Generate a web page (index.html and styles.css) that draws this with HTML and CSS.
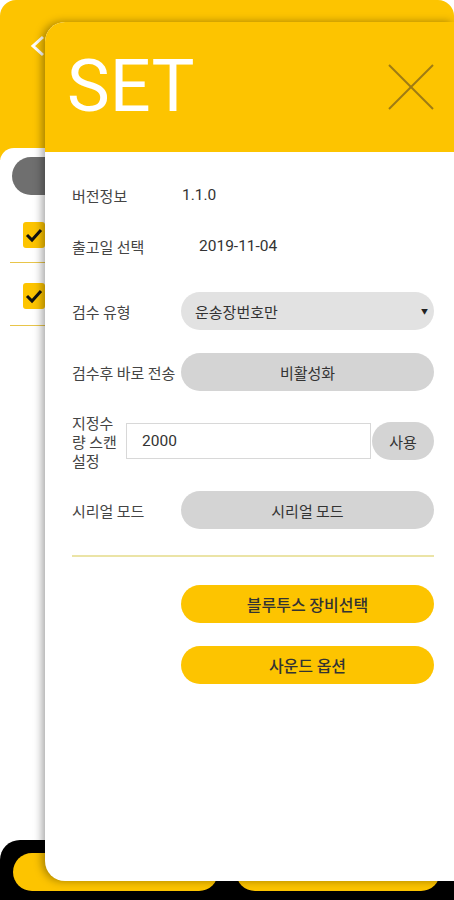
FILE: index.html
```html
<!DOCTYPE html>
<html>
<head>
  <meta charset="UTF-8">
  <title>SET</title>
  <link rel="stylesheet" href="styles.css">
</head>
<body>
  <!-- page behind the dialog -->
  <div class="screen">
    <header class="bg-head">
      <svg class="back" width="16" height="22" viewBox="0 0 16 22"><polyline points="13,2 3,11 13,20" fill="none" stroke="#fff" stroke-width="3"/></svg>
    </header>
    <section class="bg-list">
      <div class="bg-pill"></div>
      <div class="bg-row first"><span class="check"><svg width="22" height="26" viewBox="0 0 22 26"><polyline points="4,13 9,18 18,8" fill="none" stroke="#111" stroke-width="3"/></svg></span></div>
      <div class="bg-row"><span class="check"><svg width="22" height="26" viewBox="0 0 22 26"><polyline points="4,13 9,18 18,8" fill="none" stroke="#111" stroke-width="3"/></svg></span></div>
    </section>
    <footer class="bg-foot">
      <span class="foot-btn"></span>
      <span class="foot-btn"></span>
    </footer>
  </div>

  <!-- settings dialog -->
  <div class="modal">
    <div class="modal-head">
      <h1>SET</h1>
      <svg class="close" width="46" height="46" viewBox="0 0 46 46">
        <line x1="1" y1="1" x2="45" y2="45" stroke="#9e7b14" stroke-width="2"/>
        <line x1="45" y1="1" x2="1" y2="45" stroke="#9e7b14" stroke-width="2"/>
      </svg>
    </div>
    <div class="modal-body">
      <div class="row r1"><span class="label">버전정보</span><span class="value">1.1.0</span></div>
      <div class="row r2"><span class="label">출고일 선택</span><span class="value date">2019-11-04</span></div>
      <div class="row r3"><span class="label">검수 유형</span><div class="pill select"><span>운송장번호만</span><span class="caret">▼</span></div></div>
      <div class="row r4"><span class="label">검수후 바로 전송</span><div class="pill">비활성화</div></div>
      <div class="row r5"><span class="label narrow">지정수량 스캔설정</span><div class="qty">2000</div><div class="pill use">사용</div></div>
      <div class="row r6"><span class="label">시리얼 모드</span><div class="pill">시리얼 모드</div></div>
      <hr class="divider">
      <div class="btn first">블루투스 장비선택</div>
      <div class="btn">사운드 옵션</div>
    </div>
  </div>
</body>
</html>
```

FILE: styles.css
```css
body { margin: 0; width: 454px; height: 900px; overflow: hidden; position: relative; background: #fff; font-family: "Noto Sans CJK KR", "Noto Sans", sans-serif; color: #333; }

.screen { display: flex; flex-direction: column; height: 900px; }
.bg-head { height: 160px; background: #fdc400; border-radius: 16px 16px 0 0; box-sizing: border-box; padding: 35px 0 0 30px; }
.bg-list { flex: 1; background: #fff; margin-top: -12px; border-radius: 14px 14px 0 0; padding: 9px 0 0 10px; }
.bg-pill { width: 120px; height: 38px; margin-left: 2px; background: #6f6f6f; border-radius: 19px; }
.bg-row { margin-top: 20px; padding: 0 0 16px 13px; border-bottom: 1.5px solid #e8c54a; }
.bg-row.first { margin-top: 27px; padding-bottom: 14px; }
.check { display: block; width: 22px; height: 26px; background: #fdc400; border-radius: 3px; }
.bg-foot { height: 60px; background: #000; border-radius: 20px 0 0 0; box-sizing: border-box; padding: 13px 14px 0 13px; display: flex; gap: 18px; }
.foot-btn { flex: 1; height: 38px; background: #fdc400; border-radius: 19px; }

.modal { position: absolute; top: 22px; left: 45px; right: 0; height: 859px; background: #fff; border-radius: 20px 0 0 20px; overflow: hidden; box-shadow: -3px 0 8px rgba(0,0,0,0.35); }
.modal-head { height: 130px; background: #fdc400; display: flex; align-items: center; justify-content: space-between; padding: 0 20px 0 22px; }
.modal-head h1 { margin: 0; font-family: Roboto, sans-serif; font-weight: 400; font-size: 72px; line-height: 1; color: #fff; }

.modal-body { padding: 24px 20px 0 27px; }
.row { display: flex; align-items: center; font-size: 15px; }
.label { width: 109px; flex: none; color: #444; }
.label.narrow { width: 50px; margin-right: 4px; line-height: 19px; }
.value { font-family: Roboto, sans-serif; font-size: 15.5px; padding-left: 1px; }
.value.date { padding-left: 18px; }
.r1 { height: 38px; }
.r2 { height: 38px; margin-top: 13px; }
.r3 { margin-top: 27px; }
.r4 { margin-top: 23px; }
.r5 { margin-top: 24px; height: 52px; }
.r6 { margin-top: 24px; }

.pill { flex: 1; height: 38px; border-radius: 19px; background: #d4d4d4; display: flex; align-items: center; justify-content: center; font-size: 15px; color: #333; }
.pill.select { background: #e2e2e2; justify-content: space-between; padding: 0 6px 0 14px; }
.caret { font-size: 7px; color: #222; }
.qty { flex: 1; height: 36px; box-sizing: border-box; border: 1px solid #d8d8d8; display: flex; align-items: center; padding-left: 15px; font-family: Roboto, sans-serif; font-size: 15.5px; color: #333; }
.pill.use { flex: none; width: 62px; margin-left: 1px; }

.divider { margin: 26px 0 0; border: none; border-top: 2px solid #ebe4a6; }
.btn { margin: 23px 0 0 109px; height: 38px; border-radius: 19px; background: #fdc400; display: flex; align-items: center; justify-content: center; font-size: 16px; font-weight: 500; color: #333; }
.btn.first { margin-top: 28px; }
```
